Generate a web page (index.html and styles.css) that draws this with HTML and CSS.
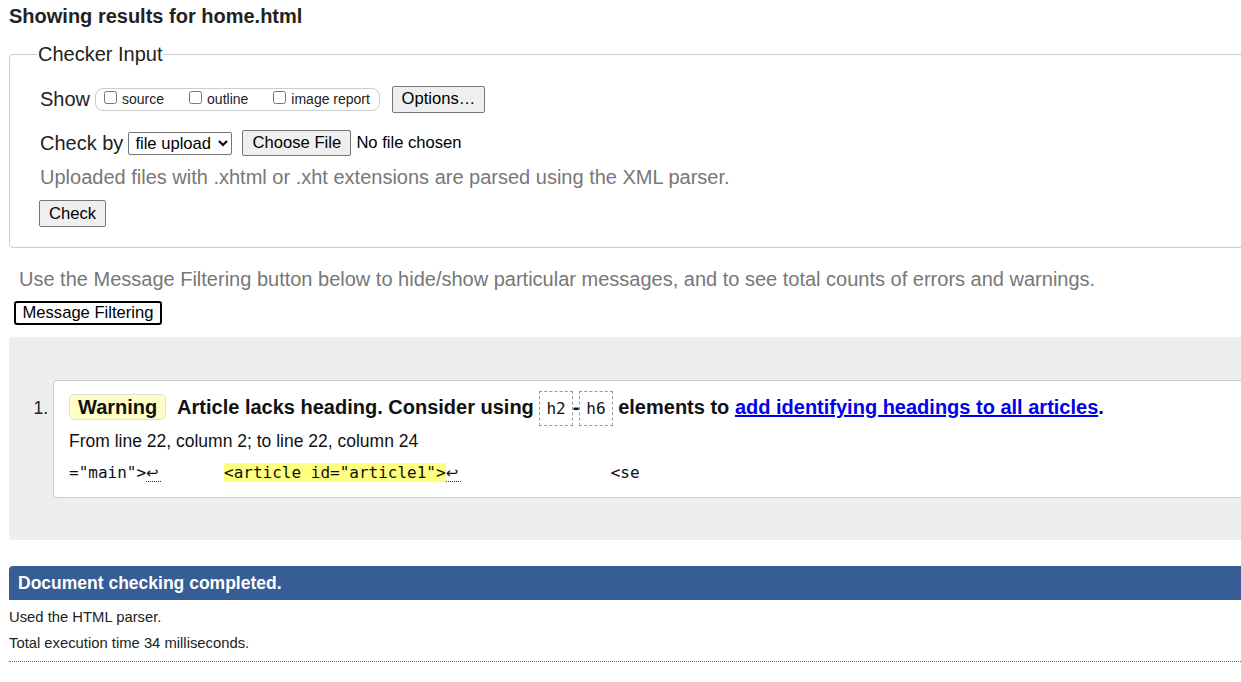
FILE: index.html
```html
<!DOCTYPE html>
<html lang="en">
<head>
<meta charset="utf-8">
<title>Showing results for home.html - Nu Html Checker</title>
<link rel="stylesheet" href="styles.css">
</head>
<body>
<div class="page">
  <h2 class="title">Showing results for home.html</h2>
  <form class="checker-form">
    <fieldset class="checker">
      <legend class="checker-legend">Checker Input</legend>
      <div class="row show-row">
        <span class="row-label">Show</span>
        <span class="show-box">
          <label class="opt"><input type="checkbox" class="cb">source</label>
          <label class="opt"><input type="checkbox" class="cb">outline</label>
          <label class="opt last"><input type="checkbox" class="cb">image report</label>
        </span>
        <button type="button" class="btn options-btn">Options…</button>
      </div>
      <div class="row checkby-row">
        <span class="row-label">Check by</span>
        <select class="select"><option>file upload</option></select>
        <button type="button" class="btn choose-btn">Choose File</button>
        <span class="no-file">No file chosen</span>
      </div>
      <p class="hint">Uploaded files with .xhtml or .xht extensions are parsed using the XML parser.</p>
      <button type="button" class="btn check-btn">Check</button>
    </fieldset>
  </form>
  <p class="filter-hint">Use the Message Filtering button below to hide/show particular messages, and to see total counts of errors and warnings.</p>
  <button type="button" class="filter-btn">Message Filtering</button>
  <div class="results">
    <ol class="messages">
      <li class="message">
        <div class="card">
          <p class="msg-line"><strong class="badge">Warning</strong> <span class="msg-text">Article lacks heading. Consider using <code class="tag">h2</code>-<code class="tag">h6</code> elements to <a href="#" class="msg-link">add identifying headings to all articles</a>.</span></p>
          <p class="location">From line 22, column 2; to line 22, column 24</p>
          <p class="extract"><code>="main"&gt;<span class="lf">↩</span><span class="gap1"></span><b class="hl">&lt;article id="article1"&gt;</b><span class="lf">↩</span><span class="gap2"></span>&lt;se</code></p>
        </div>
      </li>
    </ol>
  </div>
  <p class="done">Document checking completed.</p>
  <p class="details first">Used the HTML parser.</p>
  <p class="details">Total execution time 34 milliseconds.</p>
  <div class="rule"></div>
</div>
</body>
</html>
```
FILE: styles.css
```css
html, body {
  margin: 0;
  padding: 0;
  overflow: hidden;
  background: #fff;
}
body {
  font-family: "Liberation Sans", Arial, sans-serif;
  color: #111;
}
.page {
  width: 1300px;
  padding-left: 9px;
}
.title {
  margin: 0;
  padding-top: 5px;
  font-size: 20px;
  line-height: 23px;
  font-weight: bold;
  color: #222;
}
.checker-form {
  margin: 0;
  padding-top: 15px;
}
.checker {
  margin: 0;
  padding: 18px 0 20px 30px;
  border: 1px solid #ccc;
  border-radius: 4px;
}
.checker-legend {
  margin-left: -3px;
  padding: 0 1px;
  font-size: 20px;
  line-height: 23px;
  color: #222;
}
.row {
  display: flex;
  align-items: center;
}
.row-label {
  font-size: 20px;
  color: #222;
}
.show-row {
  height: 30px;
}
.show-box {
  display: inline-flex;
  align-items: center;
  height: 21px;
  margin-left: 5px;
  padding: 0 9px 0 8px;
  border: 1px solid #ccc;
  border-radius: 8px;
}
.opt {
  display: inline-flex;
  align-items: center;
  font-size: 14px;
  color: #222;
  margin-right: 25px;
}
.opt.last {
  margin-right: 0;
}
.cb {
  width: 13px;
  height: 13px;
  margin: -4px 5px 0 0;
}
.btn {
  font-family: "Liberation Sans", Arial, sans-serif;
  font-size: 16.6px;
  color: #000;
  background: #efefef;
  border: 1px solid #767676;
  border-radius: 2px;
  padding: 0;
}
.options-btn {
  height: 27px;
  width: 93px;
  margin-left: 12px;
}
.checkby-row {
  height: 30px;
  margin-top: 14px;
}
.select {
  font-family: "Liberation Sans", Arial, sans-serif;
  font-size: 16.6px;
  height: 23px;
  width: 104px;
  margin-left: 5px;
  padding: 0 0 0 2px;
  border: 1px solid #767676;
  border-radius: 2px;
  background: #fff;
  color: #000;
}
.choose-btn {
  height: 26px;
  width: 109px;
  margin-left: 10px;
}
.no-file {
  margin-left: 5px;
  font-size: 16.6px;
  color: #000;
}
.hint {
  margin: 8px 0 0;
  font-size: 20px;
  line-height: 23px;
  color: #777;
}
.check-btn {
  display: block;
  margin-top: 11px;
  height: 27px;
  width: 67px;
  margin-left: -1px;
}
.filter-hint {
  margin: 20px 0 0 10px;
  font-size: 20px;
  line-height: 23px;
  color: #777;
}
.filter-btn {
  display: block;
  margin: 10px 0 0 5px;
  height: 24px;
  width: 148px;
  padding: 0;
  font-family: "Liberation Sans", Arial, sans-serif;
  font-size: 16.6px;
  color: #000;
  background: #fff;
  border: 2px solid #000;
  border-radius: 3px;
}
.results {
  margin-top: 12px;
  background: #eee;
  border-radius: 4px;
  padding: 43px 0 42px;
}
.messages {
  margin: 0;
  padding-left: 44px;
  font-size: 17.5px;
}
.message::marker {
  color: #222;
}
.card {
  background: #fff;
  border: 1px solid #ccc;
  border-radius: 4px;
  padding: 12px 15px 13px 15px;
}
.msg-line {
  margin: 0;
  font-size: 20px;
  line-height: 29px;
  font-weight: bold;
}
.badge {
  display: inline-block;
  padding: 0 8px;
  line-height: 24px;
  background: #ffffc6;
  border: 1px solid #ddd;
  border-radius: 5px;
  margin-right: 6px;
  color: #111;
}
.msg-text {
  color: #111;
}
.tag {
  font-family: "DejaVu Sans Mono", monospace;
  font-weight: normal;
  font-size: 16px;
  line-height: 1;
  padding: 7px 6px;
  border: 1px dashed #999;
}
.msg-link {
  color: #00e;
  text-decoration: underline;
}
.location {
  margin: 9px 0 0;
  font-size: 17.5px;
  line-height: 20px;
  color: #111;
}
.extract {
  margin: 10px 0 0;
  line-height: 22px;
}
.extract code {
  font-family: "DejaVu Sans Mono", monospace;
  font-size: 16px;
  white-space: pre;
  color: #111;
}
.lf {
  display: inline-block;
  width: 15px;
  border-bottom: 1px dotted #333;
  line-height: 16px;
  font-size: 15px;
  font-family: "DejaVu Sans", sans-serif;
}
.gap1 {
  display: inline-block;
  width: 63px;
}
.gap2 {
  display: inline-block;
  width: 150px;
}
.hl {
  font-weight: normal;
  background: #ffff80;
}
.done {
  margin: 26px 0 0;
  height: 34px;
  line-height: 34px;
  padding-left: 9px;
  background: #365d95;
  color: #fff;
  font-weight: bold;
  font-size: 17.5px;
  border-radius: 4px 0 0 0;
}
.details {
  margin: 0;
  font-size: 14.8px;
  line-height: 26px;
  color: #222;
}
.details.first {
  margin-top: 4px;
}
.rule {
  margin-top: 5px;
  border-top: 1px dotted #666;
}
```
